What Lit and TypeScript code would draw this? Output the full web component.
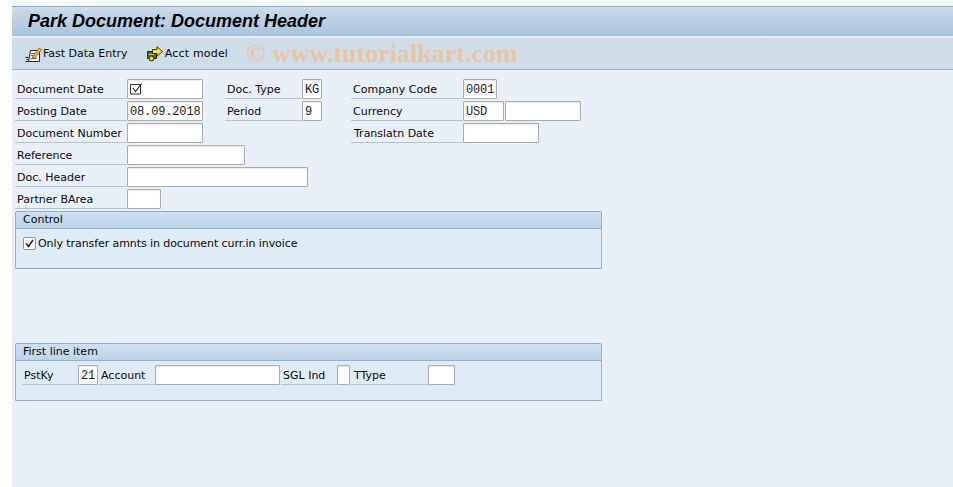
import { LitElement, html, css } from "lit";
import { customElement } from "lit/decorators.js";

@customElement("app-root")
export class AppRoot extends LitElement {
  static styles = css`
    :host { display: block; width: 953px; height: 487px; overflow: hidden; background: #fff; font-family: "DejaVu Sans", sans-serif; font-size: 11px; color: #0b0b0b; }
    .top { height: 6px; background: #f6f8fc; margin-left: 12px; border-bottom: 1px solid #9aa9c2; }
    .main { margin-left: 12px; height: 480px; background: #e8eff7; display: flex; flex-direction: column; }
    .title { height: 29px; padding-left: 16px; display: flex; align-items: center; background: linear-gradient(#cbdcea, #a9c2dc); border-bottom: 2px solid #e4edf5; font: italic bold 18px "Liberation Sans", sans-serif; color: #000; }
    .toolbar { height: 31px; display: flex; align-items: center; padding-left: 13px; background: #cfdde9; border-bottom: 1px solid #9fb3c9; }
    .tool { display: flex; align-items: center; gap: 1px; }
    .tool svg { flex: none; }
    .tool.second { margin-left: 18px; }
    .tool.second span { margin-left: 1px; letter-spacing: 0.2px; }
    .mark { margin-left: 18px; font: bold 26px "Liberation Serif", serif; color: #e8c6a3; white-space: pre; }
    .form { padding: 9px 0 0 3px; display: flex; flex-direction: column; }
    .row { display: flex; height: 20px; margin-bottom: 2px; }
    .lab { box-sizing: border-box; height: 20px; padding: 1px 0 0 2px; line-height: 20px; border-bottom: 1px solid #b8c0c8; white-space: nowrap; flex: none; }
    .w112 { width: 112px; }
    .w77 { width: 77px; margin-left: 22px; }
    .co { width: 112px; margin-left: 29px; }
    .co.far { margin-left: 148px; padding-left: 3px; }
    .in { box-sizing: border-box; height: 20px; flex: none; background: #fff; border: 1px solid #a9acaf; border-radius: 1px; box-shadow: inset 0 1px 1px #ececec; font: 12px/21px "Liberation Mono", monospace; letter-spacing: -0.15px; padding-left: 2px; color: #222; white-space: pre; overflow: hidden; }
    .chk svg { display: block; margin: 3px 0 0 -1px; }
    .group { box-sizing: border-box; width: 587px; border: 1px solid #94aeca; border-radius: 2px 2px 0 0; background: #deeaf4; }
    .ghead { height: 16px; padding-left: 7px; line-height: 15px; background: linear-gradient(#cfe0ef, #bcd3e8); border-bottom: 1px solid #94aeca; }
    .control { height: 58px; }
    .cbody { display: flex; align-items: center; gap: 2px; padding: 8px 0 0 7px; }
    .cbody span { letter-spacing: -0.08px; }
    .box { box-sizing: border-box; width: 13px; height: 13px; background: #fff; border: 1px solid #8b9299; border-radius: 2px; }
    .box svg { display: block; }
    .line { height: 58px; margin-top: 74px; }
    .lbody { display: flex; padding: 4px 0 0 6px; }
    .lbody .lab { margin-left: 1px; }
    .lbody .lab:first-child { margin-left: 0; }
    .lbody .tt { padding-left: 3px; }
  `;

  private field(w: number, v: unknown = "") {
    return html`<div class="in" style="width:${w}px">${v}</div>`;
  }

  render() {
    return html`
      <div class="top"></div>
      <div class="main">
        <div class="title">Park Document: Document Header</div>
        <div class="toolbar">
          <div class="tool">
            <svg width="17" height="16" viewBox="0 0 17 16">
              <path d="M0.500 11.500h3M1.500 13.500h2M0.500 15.500h3" stroke="#222" fill="none"/>
              <path d="M5.500 4.500h9v11h-11z" fill="#f4f4ee" stroke="#2a2a2a"/>
              <path d="M6 7.500h4M6 9.500h3M5.500 12.500h6" stroke="#666" fill="none"/>
              <path d="M8 10l6-8 2.500 1.500-6 8-3 .5z" fill="#f2a93a" stroke="#8c5a10" stroke-width=".7"/>
            </svg>
            <span>Fast Data Entry</span>
          </div>
          <div class="tool second">
            <svg width="17" height="16" viewBox="0 0 17 16">
              <path d="M1.500 5.500h9v7h-9z" fill="#5c6a2a" stroke="#1f2410"/>
              <path d="M3 8.500h5M3 10.500h3" stroke="#c8d44a"/>
              <circle cx="5.500" cy="12.500" r="2.500" fill="#e6d23a" stroke="#2a2a10"/>
              <path d="M6.500 3.500h4.500V.8l5.500 4.700-5.500 4.700V7.500H6.500z" fill="#f8e82c" stroke="#222" stroke-width=".9"/>
            </svg>
            <span>Acct model</span>
          </div>
          <div class="mark">© www.tutorialkart.com</div>
        </div>
        <div class="form">
          <div class="row">
            <div class="lab w112">Document Date</div>
            <div class="in chk" style="width:76px"><svg width="15" height="13" viewBox="0 0 15 13"><path d="M1.500 1.500h10v9.500h-10z" fill="none" stroke="#333"/><path d="M4 5l2.500 3.500 6-8" fill="none" stroke="#222" stroke-width="1.100"/></svg></div>
            <div class="lab w77">Doc. Type</div>
            ${this.field(20, "KG")}
            <div class="lab co">Company Code</div>
            ${this.field(34, "0001")}
          </div>
          <div class="row">
            <div class="lab w112">Posting Date</div>
            ${this.field(76, "08.09.2018")}
            <div class="lab w77">Period</div>
            ${this.field(20, "9")}
            <div class="lab co">Currency</div>
            ${this.field(41, "USD")}
            <div class="in" style="width:76px;margin-left:1px"></div>
          </div>
          <div class="row">
            <div class="lab w112">Document Number</div>
            ${this.field(76)}
            <div class="lab co far">Translatn Date</div>
            ${this.field(76)}
          </div>
          <div class="row"><div class="lab w112">Reference</div>${this.field(118)}</div>
          <div class="row"><div class="lab w112">Doc. Header</div>${this.field(181)}</div>
          <div class="row"><div class="lab w112">Partner BArea</div>${this.field(34)}</div>
          <div class="group control">
            <div class="ghead">Control</div>
            <div class="cbody">
              <div class="box"><svg width="11" height="11" viewBox="0 0 11 11"><path d="M2 5.500l2.500 3L9 2" fill="none" stroke="#222" stroke-width="1.600"/></svg></div>
              <span>Only transfer amnts in document curr.in invoice</span>
            </div>
          </div>
          <div class="group line">
            <div class="ghead">First line item</div>
            <div class="lbody">
              <div class="lab" style="width:56px">PstKy</div>
              ${this.field(20, "21")}
              <div class="lab" style="width:56px">Account</div>
              ${this.field(125)}
              <div class="lab" style="width:56px">SGL Ind</div>
              ${this.field(13)}
              <div class="lab tt" style="width:77px">TType</div>
              ${this.field(27)}
            </div>
          </div>
        </div>
      </div>
    `;
  }
}
